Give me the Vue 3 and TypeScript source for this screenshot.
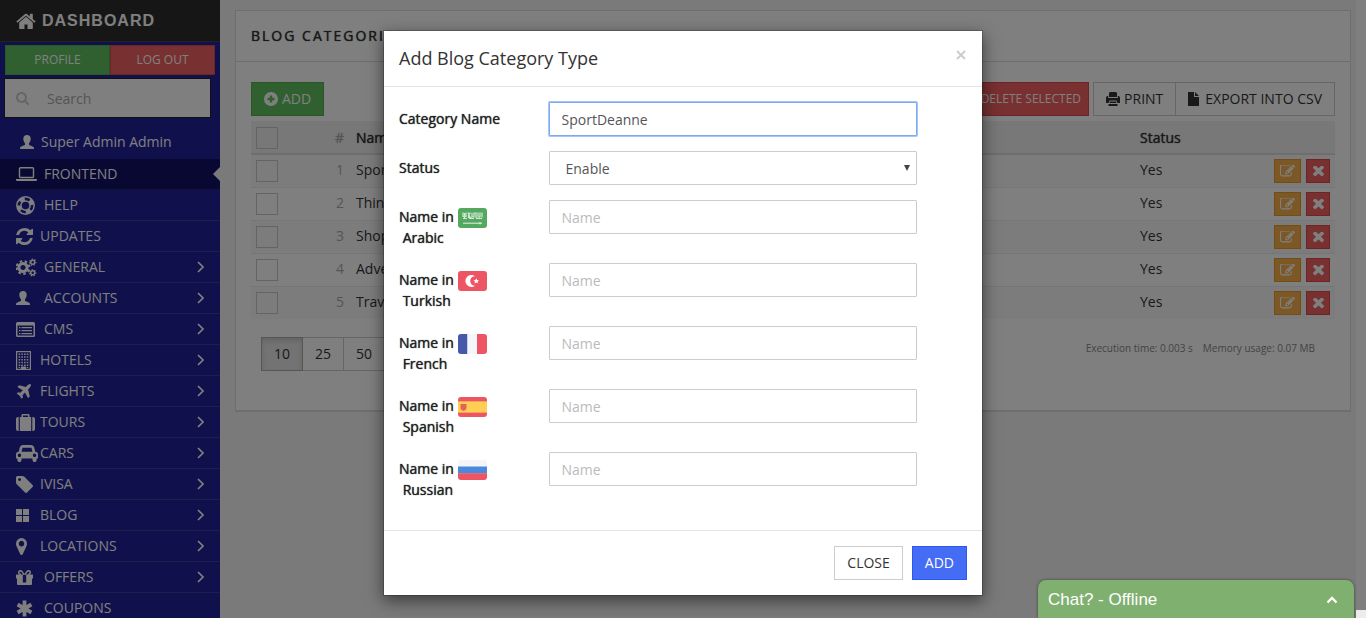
<script setup lang="ts">
import { h, ref } from 'vue'

interface Part { d: string; sw?: number; dash?: string; fill?: string }
interface Glyph { box: [number, number, number, number]; w: number; h: number; parts: Part[] }

const circ = (x: number, y: number, r: number): string =>
  `M${x - r} ${y}a${r} ${r} 0 1 0 ${2 * r} 0a${r} ${r} 0 1 0 ${-2 * r} 0z`
const rect = (x: number, y: number, w: number, hh: number): string => `M${x} ${y}h${w}v${hh}h${-w}z`

const gear = (x: number, y: number, r: number, sw: number, teeth: number): Part[] => {
  const outer = r + sw / 2 + sw / 4
  const step = (2 * Math.PI * outer) / (teeth * 2)
  return [
    { d: circ(x, y, r), sw },
    { d: circ(x, y, outer), sw: sw / 1.4, dash: `${step} ${step}` },
  ]
}

const windows = [0, 1, 2, 3, 4]
  .flatMap((row) => [0, 1, 2, 3].map((col) => rect(2.6 + col * 2.7, 2.6 + row * 2.7, 1.6, 1.5)))
  .join('')

const glyphs: Record<string, Glyph> = {
  home: { box: [50, 190, 1692, 1350], w: 20, h: 16, parts: [{ d: 'M1472 992v480q0 26-19 45t-45 19h-384v-384h-256v384h-384q-26 0-45-19t-19-45v-480q0-1 .5-3t.5-3l575-474 575 474q1 2 1 6zm223-69l-62 74q-8 9-21 11h-3q-13 0-21-7l-692-577-692 577q-12 8-24 7-13-2-21-11l-62-74q-8-10-7-23.5t11-21.5l719-599q32-26 76-26t76 26l244 204v-195q0-14 9-23t23-9h192q14 0 23 9t9 23v408l219 182q10 8 11 21.5t-7 23.5z' }] },
  search: { box: [64, 128, 1664, 1664], w: 13, h: 13, parts: [{ d: 'M1216 832q0-185-131.5-316.5t-316.5-131.5-316.5 131.5-131.5 316.5 131.5 316.5 316.5 131.5 316.5-131.5 131.5-316.5zm512 832q0 52-38 90t-90 38q-54 0-90-38l-343-342q-179 124-399 124-143 0-273.5-55.5t-225-150-150-225-55.5-273.5 55.5-273.5 150-225 225-150 273.5-55.5 273.5 55.5 225 150 150 225 55.5 273.5q0 220-124 399l343 343q37 37 37 90z' }] },
  user: { box: [0, 0, 14, 14], w: 14, h: 14, parts: [{ d: 'M7 0C4.6 0 3.3 1.5 3.3 3.6c0 2 .6 3.6 1.7 4.7v1.4C4.600 10.200 1.200 11.200.4 12 0 12.500 0 13.200 0 14h14c0-.8 0-1.500-.4-2-.8-.8-4.200-1.800-4.600-2.300V8.300c1.100-1.100 1.700-2.700 1.700-4.700C10.700 1.500 9.400 0 7 0z' }] },
  laptop: { box: [0, 256, 1920, 1280], w: 21, h: 14, parts: [{ d: 'M416 1280q-66 0-113-47t-47-113v-704q0-66 47-113t113-47h1088q66 0 113 47t47 113v704q0 66-47 113t-113 47h-1088zm-32-864v704q0 13 9.500 22.500t22.500 9.500h1088q13 0 22.500-9.500t9.500-22.500v-704q0-13-9.500-22.500t-22.500-9.500h-1088q-13 0-22.500 9.500t-9.500 22.500zm1376 928h160v96q0 40-47 68t-113 28h-1600q-66 0-113-28t-47-68v-96h1760z' }] },
  help: { box: [0, 0, 20, 20], w: 19, h: 19, parts: [{ d: circ(10, 10, 9.1), sw: 1.6 }, { d: circ(10, 10, 4.8), sw: 1.6 }, { d: circ(10, 10, 6.9), sw: 4.2, dash: '5.42 5.42' }] },
  refresh: { box: [128, 128, 1536, 1536], w: 17, h: 17, parts: [{ d: 'M1639 1056q0 5-1 7-64 268-268 434.500t-478 166.500q-146 0-282.500-55t-243.500-157l-129 129q-19 19-45 19t-45-19-19-45v-448q0-26 19-45t45-19h448q26 0 45 19t19 45-19 45l-137 137q71 66 161 102t187 36q134 0 250-65t186-179q11-17 53-117 8-23 30-23h192q13 0 22.500 9.500t9.500 22.500zm25-800v448q0 26-19 45t-45 19h-448q-26 0-45-19t-19-45 19-45l138-138q-148-137-349-137-134 0-250 65t-186 179q-11 17-53 117-8 23-30 23h-199q-13 0-22.500-9.500t-9.500-22.500v-7q65-268 270-434.500t480-166.500q146 0 284 55.500t245 156.500l130-129q19-19 45-19t45 19 19 45z' }] },
  cogs: { box: [0, 0, 21, 19], w: 21, h: 19, parts: [...gear(7, 9.5, 4.1, 3, 8), ...gear(16.7, 4.2, 2, 1.5, 7), ...gear(16.7, 14.8, 2, 1.5, 7)] },
  list: { box: [0, 0, 19, 15], w: 19, h: 15, parts: [{ d: 'M1.500 0h16q1.500 0 1.500 1.500v12q0 1.500-1.500 1.500h-16q-1.500 0-1.500-1.500v-12q0-1.500 1.500-1.500zM1.500 3.500v10h16v-10zM3 5h1.500v1.300h-1.500zM3 8h1.500v1.300h-1.500zM3 11h1.500v1.300h-1.500zM5.500 5h10.500v1.300h-10.500zM5.500 8h10.500v1.300h-10.500zM5.500 11h10.500v1.300h-10.500z' }] },
  hotel: { box: [0, 0, 15, 19], w: 15, h: 19, parts: [{ d: `M0 0h15v19h-15zM1.200 1.200v16.600h3.800v-2.300h5v2.300h3.800v-16.600z` }, { d: windows + rect(2.6, 16, 1.6, 1) + rect(10.7, 16, 1.6, 1) }] },
  plane: { box: [100, 128, 1500, 1450], w: 15, h: 15, parts: [{ d: 'M1568 160q44 52 12 148t-108 172l-161 161 160 696q5 19-12 33l-128 96q-7 6-19 6-4 0-7-1-15-3-21-16l-279-508-259 259 53 194q5 17-8 31l-96 96q-9 9-23 9h-2q-15-2-24-13l-189-252-252-189q-11-7-13-23-1-13 9-25l96-97q9-9 23-9 6 0 8 1l194 53 259-259-508-279q-14-8-17-24-2-16 9-27l128-128q14-13 30-8l665 159 160-160q76-76 172-108t148 12z' }] },
  suitcase: { box: [0, 0, 19, 17], w: 19, h: 17, parts: [{ d: 'M0 5q0-2 2-2h.7v14h-.7q-2 0-2-2zM3.800 3h1.700v-2q0-1 1-1h6q1 0 1 1v2h1.700v14h-11.400zM7 3h5v-1.500h-5zM16.300 3h.7q2 0 2 2v10q0 2-2 2h-.7z' }] },
  car: { box: [0, 128, 2048, 1600], w: 22, h: 17, parts: [{ d: 'M480 1088q0-66-47-113t-113-47-113 47-47 113 47 113 113 47 113-47 47-113zm36-320h1016l-89-357q-2-8-14-17.500t-21-9.500h-768q-9 0-21 9.500t-14 17.500zm1372 320q0-66-47-113t-113-47-113 47-47 113 47 113 113 47 113-47 47-113zm160-96v384q0 14-9 23t-23 9h-96v128q0 80-56 136t-136 56-136-56-56-136v-128h-1024v128q0 80-56 136t-136 56-136-56-56-136v-128h-96q-14 0-23-9t-9-23v-384q0-93 65.500-158.500t158.500-65.500h28l105-419q23-94 104-157.500t179-63.500h768q98 0 179 63.500t104 157.500l105 419h28q93 0 158.500 65.500t65.500 158.500z' }] },
  tag: { box: [128, 128, 1516, 1516], w: 17, h: 17, parts: [{ d: 'M576 448q0-53-37.500-90.500t-90.500-37.500-90.500 37.500-37.500 90.500 37.500 90.500 90.500 37.500 90.500-37.500 37.500-90.500zm1067 576q0 53-37 90l-491 492q-39 37-91 37-53 0-90-37l-715-716q-38-37-64.500-101t-26.500-117v-416q0-52 38-90t90-38h416q53 0 117 26.500t102 64.500l715 714q37 39 37 91z' }] },
  grid: { box: [0, 0, 13, 13], w: 13, h: 13, parts: [{ d: rect(0, 0, 6, 6) + rect(7, 0, 6, 6) + rect(0, 7, 6, 6) + rect(7, 7, 6, 6) }] },
  marker: { box: [384, 128, 1024, 1536], w: 11, h: 17, parts: [{ d: 'M1152 640q0-106-75-181t-181-75-181 75-75 181 75 181 181 75 181-75 75-181zm256 0q0 109-33 179l-364 774q-16 33-47.500 52t-67.500 19-67.500-19-46.500-52l-365-774q-33-70-33-179 0-212 150-362t362-150 362 150 150 362z' }] },
  gift: { box: [0, 0, 17, 15], w: 17, h: 15, parts: [{ d: 'M.5 4.500h16q.5 0 .5.5v3.500h-1v5.500q0 1-1 1h-13q-1 0-1-1v-5.500h-1v-3.500q0-.5.5-.5zM6.800 5v7.500h3.400v-7.500z' }, { d: 'M8 4.500L6 1.600q-1-1.200-2.300-.6t-.9 2q.4 1.500 2.200 1.500M9 4.500L11 1.600q1-1.200 2.300-.6t.9 2q-.4 1.500-2.200 1.500', sw: 1.500 }] },
  asterisk: { box: [0, 0, 17, 17], w: 17, h: 17, parts: [{ d: 'M8.500 .5v16M1.600 4.500l13.800 8M15.400 4.500l-13.800 8', sw: 3.8 }] },
  plus: { box: [0, 0, 14, 14], w: 14, h: 14, parts: [{ d: circ(7, 7, 7) + 'M5.800 3.500v2.300h-2.300v2.400h2.300v2.300h2.400v-2.300h2.300v-2.400h-2.300v-2.300z' }] },
  print: { box: [0, 0, 14, 14], w: 14, h: 14, parts: [{ d: 'M4 0h6l1 1v4h-8v-4zM1 4h1.200v2h9.600v-2h1.200l1 1.500v5.500h-2.500l-1-2.500h-7l-1 2.500h-2.500v-5.500zM3.600 9.500h6.800v1.500h-6.800zM2.500 12h9v2h-9z' }] },
  file: { box: [0, 0, 11, 14], w: 11, h: 14, parts: [{ d: 'M0 0h6v5h5v9h-11zM7 0l4 4h-4z' }] },
  edit: { box: [0, 200, 1792, 1400], w: 15, h: 12, parts: [{ d: 'M888 1184l116-116-152-152-116 116v56h96v96h56zm440-720q-16-16-33 1l-350 350q-17 17-1 33t33-1l350-350q17-17 1-33zm80 594v190q0 119-84.500 203.500t-203.500 84.500h-832q-119 0-203.500-84.500t-84.500-203.500v-832q0-119 84.500-203.500t203.500-84.500h832q63 0 117 25 15 7 18 23 3 17-9 29l-49 49q-14 14-32 8-23-6-45-6h-832q-66 0-113 47t-47 113v832q0 66 47 113t113 47h832q66 0 113-47t47-113v-126q0-13 9-22l64-64q15-15 35-7t20 29zm-96-738l288 288-672 672h-288v-288zm444 132l-92 92-288-288 92-92q28-28 68-28t68 28l152 152q28 28 28 68t-28 68z' }] },
  times: { box: [302, 434, 1188, 1188], w: 11, h: 11, parts: [{ d: 'M1490 1322q0 40-28 68l-136 136q-28 28-68 28t-68-28l-294-294-294 294q-28 28-68 28t-68-28l-136-136q-28-28-28-68t28-68l294-294-294-294q-28-28-28-68t28-68l136-136q28-28 68-28t68 28l294 294 294-294q28-28 68-28t68 28l136 136q28 28 28 68t-28 68l-294 294 294 294q28 28 28 68z' }] },
  chevron: { box: [0, 0, 7, 12], w: 7, h: 12, parts: [{ d: 'M1 1l5 5-5 5', sw: 1.700 }] },
  up: { box: [0, 0, 12, 8], w: 12, h: 8, parts: [{ d: 'M1.500 6.500l4.500-4.500 4.500 4.500', sw: 2.300 }] },
  close: { box: [0, 0, 10, 10], w: 10, h: 10, parts: [{ d: 'M1 1l8 8M9 1l-8 8', sw: 1.900 }] },
  caret: { box: [0, 0, 6, 6], w: 6, h: 6, parts: [{ d: 'M0 0h6l-3 6z' }] },
  ar: { box: [0, 0, 29, 20], w: 29, h: 20, parts: [{ d: rect(0, 0, 29, 20), fill: '#55a860' }, { d: 'M5 4.500v4h3v-4M6.500 5v5M10 4.500l2 5M12.500 4.500l-2 3v2h3M14 5v4h2v-4h2v5M20 4.500v5M22 4.500v4l-1 1M24 4.500v5M5 10.500h4M11 10.500h5M18 10.500h6', sw: 1.200, fill: '#d2ead4' }, { d: 'M5 15.200h19M22 14v2.400', sw: 1, fill: '#e4f2e4' }] },
  tr: { box: [0, 0, 29, 20], w: 29, h: 20, parts: [{ d: rect(0, 0, 29, 20), fill: '#ee5564' }, { d: 'M17 5.200a6 6 0 1 0 0 9.600a4.800 4.800 0 1 1 0-9.600zM18.200 7.300l.9 1.700 1.900.3-1.400 1.300.4 1.900-1.700-.9-1.700.9.3-1.900-1.400-1.300 1.900-.3z', fill: '#fff' }] },
  fr: { box: [0, 0, 29, 20], w: 29, h: 20, parts: [{ d: rect(0, 0, 9.5, 20), fill: '#4758a9' }, { d: rect(9.5, 0, 9.500, 20), fill: '#f5f6fa' }, { d: rect(19, 0, 10, 20), fill: '#ee5564' }] },
  es: { box: [0, 0, 29, 20], w: 29, h: 20, parts: [{ d: rect(0, 0, 29, 20), fill: '#ee5564' }, { d: rect(0, 4, 29, 12), fill: '#f5a54f' }, { d: rect(0, 5, 29, 10), fill: '#ffce54' }, { d: 'M2.500 7h6v4q0 2-3 3q-3-1-3-3z', fill: '#e8605a' }] },
  ru: { box: [0, 0, 29, 20], w: 29, h: 20, parts: [{ d: rect(0, 0, 29, 6.700), fill: '#f5f6fa' }, { d: rect(0, 6.500, 29, 7), fill: '#4a89dc' }, { d: rect(0, 13.300, 29, 6.700), fill: '#ee5564' }] },
}

const Icon = (props: { name: string }) => {
  const g = glyphs[props.name]
  return h(
    'svg',
    { width: g.w, height: g.h, viewBox: g.box.join(' '), preserveAspectRatio: 'none', 'aria-hidden': 'true' },
    g.parts.map((p) =>
      h('path', p.sw
        ? { d: p.d, fill: 'none', stroke: p.fill ?? 'currentColor', 'stroke-width': p.sw, 'stroke-dasharray': p.dash }
        : { d: p.d, fill: p.fill ?? 'currentColor', 'fill-rule': 'evenodd' }),
    ),
  )
}
Icon.props = ['name']

const menu = [
  { text: 'FRONTEND', icon: 'laptop', wide: true, active: true },
  { text: 'HELP', icon: 'help', wide: true },
  { text: 'UPDATES', icon: 'refresh' },
  { text: 'GENERAL', icon: 'cogs', wide: true, sub: true },
  { text: 'ACCOUNTS', icon: 'user', wide: true, sub: true },
  { text: 'CMS', icon: 'list', wide: true, sub: true },
  { text: 'HOTELS', icon: 'hotel', sub: true },
  { text: 'FLIGHTS', icon: 'plane', sub: true },
  { text: 'TOURS', icon: 'suitcase', sub: true },
  { text: 'CARS', icon: 'car', sub: true },
  { text: 'IVISA', icon: 'tag', sub: true },
  { text: 'BLOG', icon: 'grid', sub: true },
  { text: 'LOCATIONS', icon: 'marker', sub: true },
  { text: 'OFFERS', icon: 'gift', wide: true, sub: true },
  { text: 'COUPONS', icon: 'asterisk', wide: true },
]

const rows = ['Sports', 'Things', 'Shop', 'Adventure', 'Travel']
const languages = [
  { code: 'ar', name: 'Arabic' },
  { code: 'tr', name: 'Turkish' },
  { code: 'fr', name: 'French' },
  { code: 'es', name: 'Spanish' },
  { code: 'ru', name: 'Russian' },
]
const category = ref('SportDeanne')
const status = ref('Enable')
</script>

<template>
  <div class="app">
    <aside class="sidebar">
      <a class="brand" href="#"><Icon name="home" />DASHBOARD</a>
      <div class="account">
        <a class="btn green" href="#">PROFILE</a>
        <a class="btn red" href="#">LOG OUT</a>
      </div>
      <label class="search">
        <Icon name="search" />
        <input type="text" placeholder="Search" aria-label="Search" />
      </label>
      <div class="who"><Icon name="user" />Super Admin Admin</div>
      <nav>
        <a v-for="m in menu" :key="m.text" href="#" class="item" :class="{ active: m.active }">
          <span class="slot" :class="{ wide: m.wide }"><Icon :name="m.icon" /></span>
          <span class="text">{{ m.text }}</span>
          <Icon v-if="m.sub" name="chevron" />
        </a>
      </nav>
    </aside>

    <main class="main">
      <section class="panel">
        <h1>BLOG CATEGORIES</h1>
        <div class="content">
          <div class="toolbar">
            <button class="btn green add"><Icon name="plus" />ADD</button>
            <div class="right">
              <button class="btn red delete">DELETE SELECTED</button>
              <div class="group">
                <button class="btn plain"><Icon name="print" />PRINT</button>
                <button class="btn plain csv"><Icon name="file" />EXPORT INTO CSV</button>
              </div>
            </div>
          </div>
          <table>
            <colgroup><col class="c-check" /><col class="c-num" /><col /><col class="c-status" /><col class="c-act" /></colgroup>
            <thead>
              <tr>
                <th><input type="checkbox" aria-label="Select all" /></th>
                <th class="num">#</th>
                <th>Name</th>
                <th>Status</th>
                <th></th>
              </tr>
            </thead>
            <tbody>
              <tr v-for="(r, i) in rows" :key="r">
                <td><input type="checkbox" :aria-label="r" /></td>
                <td class="num">{{ i + 1 }}</td>
                <td>{{ r }}</td>
                <td>Yes</td>
                <td>
                  <div class="actions">
                    <button class="btn orange" aria-label="Edit"><Icon name="edit" /></button>
                    <button class="btn red" aria-label="Delete"><Icon name="times" /></button>
                  </div>
                </td>
              </tr>
            </tbody>
          </table>
          <div class="foot">
            <div class="pages">
              <button class="on">10</button><button>25</button><button>50</button>
            </div>
            <div class="stats"><span>Execution time: 0.003 s</span><span>Memory usage: 0.07 MB</span></div>
          </div>
        </div>
      </section>
    </main>
    <div class="track"></div>
    <div class="backdrop"></div>
    <div class="corner"></div>

    <form class="modal" role="dialog" aria-labelledby="modal-title" @submit.prevent>
      <header>
        <h2 id="modal-title">Add Blog Category Type</h2>
        <button class="x" type="button" aria-label="Close dialog"><Icon name="close" /></button>
      </header>
      <div class="fields">
        <div class="field">
          <label for="cat">Category Name</label>
          <input id="cat" v-model="category" class="focused" type="text" />
        </div>
        <div class="field">
          <label for="status">Status</label>
          <div class="select">
            <select id="status" v-model="status"><option>Enable</option><option>Disable</option></select>
            <Icon name="caret" />
          </div>
        </div>
        <div v-for="l in languages" :key="l.code" class="field">
          <label :for="l.code">Name in <Icon class="flag" :name="l.code" /><br />&nbsp;{{ l.name }}</label>
          <input :id="l.code" type="text" placeholder="Name" />
        </div>
      </div>
      <footer>
        <button class="btn plain" type="button">CLOSE</button>
        <button class="btn blue" type="submit">ADD</button>
      </footer>
    </form>

    <button class="chat">Chat? - Offline<Icon name="up" /></button>
  </div>
</template>

<style>
body { margin: 0; }
</style>

<style scoped>
* { box-sizing: border-box; }
.app {
  position: relative;
  display: flex;
  height: 100vh;
  overflow: hidden;
  background: #f4f4f4;
  color: #333;
  font: 14px/20px "Open Sans", "Noto Sans", sans-serif;
}
a { color: inherit; text-decoration: none; }
button, input, select { font: inherit; color: inherit; margin: 0; border-radius: 0; }
svg { flex: none; }

.sidebar { flex: 0 0 220px; background: #202098; color: #fff; overflow: hidden; }
.brand {
  display: flex;
  align-items: center;
  gap: 6px;
  height: 42px;
  padding-left: 16px;
  background: #2c2c2c;
  border-bottom: 1px solid #444;
  font: bold 16px/20px "Liberation Sans", Arial, sans-serif;
  letter-spacing: 1px;
}
.account { display: flex; padding: 3px 5px; }
.account .btn { flex: 1; height: 30px; font-size: 12px; padding: 0; }
.search {
  display: flex;
  align-items: center;
  gap: 10px;
  height: 40px;
  margin: 0 9px 0 4px;
  padding-left: 11px;
  background: #fff;
  border: 1px solid #222;
  color: #ccc;
}
.search input { flex: 1; min-width: 0; height: 36px; border: 0; background: transparent; padding: 0 8px; outline: 0; }
.search input::placeholder { color: #aaa; opacity: 1; }
.who { display: flex; align-items: center; gap: 7px; height: 41px; padding: 6px 0 0 20px; }
.item {
  position: relative;
  display: flex;
  align-items: center;
  height: 31px;
  padding: 0 16px;
  border-bottom: 1px solid #3c3c9c;
}
.item.active { background: #101064; border-color: #24246c; }
.item.active::after {
  content: "";
  position: absolute;
  right: 0;
  top: 8px;
  border: 7px solid transparent;
  border-left: 0;
  border-right-color: #f4f4f4;
}
.slot { display: flex; width: 24px; }
.slot.wide { width: 28px; }
.text { flex: 1; }

.btn {
  display: flex;
  align-items: center;
  justify-content: center;
  height: 34px;
  padding: 0 12px;
  border: 1px solid;
  color: #fff;
  white-space: nowrap;
}
.green { background: #60c060; border-color: #50b050; }
.red { background: #f06060; border-color: #dc4848; }
.orange { background: #f8b04c; border-color: #e89a28; }
.plain { background: #fff; border-color: #ccc; color: #333; }
.blue { background: #446cf5; border-color: #2c58f0; }

.main { flex: 1; min-width: 0; padding: 10px 5px 10px 15px; }
.panel { min-height: 402px; background: #fff; border: 1px solid #dcdcdc; border-bottom-width: 2px; }
h1 {
  margin: 0;
  height: 51px;
  padding-left: 15px;
  border-bottom: 1px solid #dcdcdc;
  font-size: 14px;
  line-height: 50px;
  font-weight: 400;
  text-shadow: 0 0 1px currentColor;
  letter-spacing: 2px;
}
.content { padding: 20px 15px; }
.toolbar { display: flex; justify-content: space-between; margin-bottom: 5px; }
.right, .group { display: flex; }
.right { gap: 4px; }
.add { gap: 4px; }
.delete { font-size: 12px; padding: 0 7px; }
.group .btn { gap: 4px; padding: 0 12px; }
.group .csv { border-left: 0; gap: 6px; }

table { width: 100%; table-layout: fixed; border-collapse: separate; border-spacing: 0; }
.c-check { width: 40px; }
.c-num { width: 61px; }
.c-status { width: 100px; }
.c-act { width: 99px; }
th, td { height: 33px; padding: 0 4px; text-align: left; border-bottom: 1px solid #ececec; }
th { height: 34px; padding-top: 2px; background: #f0f0f0; border-bottom: 2px solid #ddd; font-weight: 400; text-shadow: 0 0 1px currentColor; }
td { padding-bottom: 3px; }
tbody tr:nth-child(odd) { background: #f9f9f9; }
tbody tr:last-child td { height: 32px; border-bottom: 0; }
.num { text-align: right; color: #aaa; padding-right: 8px; }
td input, th input {
  appearance: none;
  display: block;
  width: 22px;
  height: 22px;
  margin-left: 1px;
  border: 1px solid #c8c8c8;
  background: transparent;
}
td input { margin-top: 3px; }
.actions { display: flex; justify-content: flex-end; gap: 5px; padding: 3px 1px 0 0; }
.actions .btn { height: 24px; width: 24px; padding: 0; }
.actions .orange { width: 27px; }

.foot { display: flex; justify-content: space-between; padding: 18px 20px 0 10px; }
.pages { display: flex; }
.pages button { height: 34px; padding: 0 12px; border: 1px solid #ccc; border-left: 0; background: #fff; }
.pages .on { background: #e6e6e6; border: 1px solid #adadad; box-shadow: inset 0 3px 5px rgba(0, 0, 0, .13); }
.stats { display: flex; gap: 10px; font-size: 10px; line-height: 22px; color: #888; }

.track { flex: none; width: 10px; background: #fff; }
.backdrop { position: absolute; inset: 0; background: rgba(0, 0, 0, .5); }
.corner { position: absolute; right: 0; bottom: 0; width: 10px; height: 8px; background: #ececec; }

.modal {
  position: absolute;
  top: 30px;
  left: 50%;
  width: 600px;
  max-width: 100%;
  margin-left: -300px;
  background: #fff;
  background-clip: padding-box;
  border: 1px solid rgba(0, 0, 0, .2);
  box-shadow: 0 5px 15px rgba(0, 0, 0, .5);
}
.modal header { display: flex; justify-content: space-between; align-items: flex-start; padding: 15px; border-bottom: 1px solid #e5e5e5; }
h2 { margin: 0; font-size: 18px; line-height: 25px; font-weight: 400; }
.x { display: flex; padding: 4px 1px; border: 0; background: none; color: #ccc; }
.fields { padding: 15px 0 30px; display: grid; gap: 15px; }
.field { display: grid; grid-template-columns: 3fr 8fr 1fr; align-items: start; }
.field label { padding: 6px 0 0 15px; line-height: 21px; color: #222; text-shadow: 0 0 1px currentColor; }
.flag { vertical-align: middle; border-radius: 3px; margin: -3px 0; }
.fields input, select {
  height: 34px;
  width: 100%;
  padding: 0 12px;
  border: 1px solid #ccc;
  background: #fff;
  color: #555;
  outline: 0;
  border-radius: 1px;
}
.field > input, .select { margin: 0 15px; width: auto; min-width: 0; }
.fields input::placeholder { color: #bbb; opacity: 1; }
.fields .focused { border-color: #7faaf0; box-shadow: 0 0 0 1px #a6c6fa; }
.select { display: grid; align-items: center; }
.select select, .select svg { grid-area: 1 / 1; }
.select select { appearance: none; padding: 1px 16px 0; }
.select svg { justify-self: end; margin-right: 7px; color: #444; pointer-events: none; }
.modal footer { display: flex; justify-content: flex-end; gap: 9px; padding: 15px; border-top: 1px solid #e5e5e5; }

.chat {
  position: absolute;
  right: 12px;
  bottom: 0;
  display: flex;
  align-items: center;
  justify-content: space-between;
  width: 316px;
  height: 38px;
  padding: 2px 16px 0 10px;
  border: 0;
  border-radius: 8px 8px 0 0;
  background: #80b070;
  box-shadow: 0 0 3px rgba(0, 0, 0, .5);
  color: #fff;
  font: 17px/20px "Liberation Sans", Arial, sans-serif;
}
</style>
